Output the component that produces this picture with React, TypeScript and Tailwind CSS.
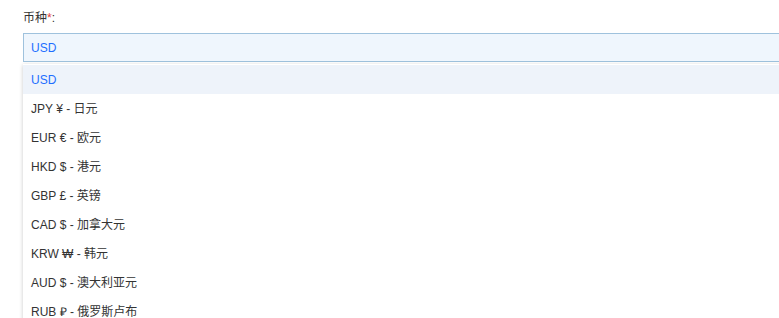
const options = [
  "USD",
  "JPY ¥ - 日元",
  "EUR € - 欧元",
  "HKD $ - 港元",
  "GBP £ - 英镑",
  "CAD $ - 加拿大元",
  "KRW ₩ - 韩元",
  "AUD $ - 澳大利亚元",
  "RUB ₽ - 俄罗斯卢布",
];

export default function App() {
  return (
    <div
      className="h-[318px] w-[779px] overflow-hidden bg-white pl-[23px] pt-[11px] text-[12px] text-[#333]"
      style={{ fontFamily: '"Liberation Sans", Arial, "Noto Sans CJK SC", sans-serif' }}
    >
      <div className="mb-[7px] h-[15px] leading-[15px]">
        币种<span className="text-[#e53935]">*</span>:
      </div>
      <div className="mr-[-10px] flex h-[29px] items-center border border-[#9fc2dd] bg-[#eff6fd] pl-[7px] text-[#1e6fff]">
        USD
      </div>
      <div className="mt-[2px] mr-[-10px] bg-white pt-[1px] shadow-[0_1px_4px_rgba(0,0,0,0.22)]">
        {options.map((o, i) => (
          <div
            key={o}
            className={`flex h-[29px] items-center pl-[8px] ${
              i === 0 ? "bg-[#eef3fa] text-[#1e6fff]" : "text-[#333]"
            }`}
          >
            {o}
          </div>
        ))}
      </div>
    </div>
  );
}
